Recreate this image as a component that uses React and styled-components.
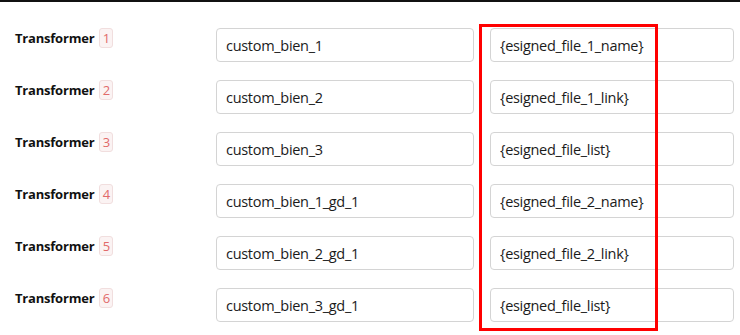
import React from 'react'
import styled, { createGlobalStyle } from 'styled-components'

const GlobalStyle = createGlobalStyle`
    body {
        margin: 0;
        background: #fff;
        font-family: "Open Sans", "Noto Sans", sans-serif;
    }
`

const Page = styled.div`
    position: relative;
    width: 740px;
    height: 335px;
    border-top: 2px solid #111;
    padding-top: 26px;
    box-sizing: border-box;
    display: flex;
    flex-direction: column;
    gap: 18px;
    overflow: hidden;
`

const Row = styled.div`
    display: grid;
    grid-template-columns: 185px 258px 244px;
    column-gap: 16px;
    padding-left: 15px;
    align-items: start;
`

const Label = styled.div`
    display: flex;
    align-items: center;
    gap: 5px;
    height: 20px;
    font-size: 13px;
    font-weight: 700;
    color: #111;
    letter-spacing: -0.2px;
`

const Badge = styled.span`
    display: inline-flex;
    align-items: center;
    justify-content: center;
    width: 14px;
    height: 20px;
    box-sizing: border-box;
    border: 1px solid #f1dede;
    border-radius: 3px;
    background: #fbf3f3;
    color: #e16a6a;
    font-size: 13px;
    font-weight: 400;
`

const Field = styled.input`
    height: 34px;
    box-sizing: border-box;
    border: 1px solid #d4d4d4;
    border-radius: 4px;
    padding: 0 9px;
    font-family: inherit;
    font-size: 14.5px;
    color: #1b1b1b;
    background: #fff;
    outline: none;
    width: 100%;
    letter-spacing: -0.3px;
`

const Highlight = styled.div`
    position: absolute;
    left: 479px;
    top: 22px;
    width: 179px;
    height: 307px;
    box-sizing: border-box;
    border: 3px solid #ff0000;
    pointer-events: none;
`

const rows = [
    ['custom_bien_1', '{esigned_file_1_name}'],
    ['custom_bien_2', '{esigned_file_1_link}'],
    ['custom_bien_3', '{esigned_file_list}'],
    ['custom_bien_1_gd_1', '{esigned_file_2_name}'],
    ['custom_bien_2_gd_1', '{esigned_file_2_link}'],
    ['custom_bien_3_gd_1', '{esigned_file_list}'],
]

const App = () => (
    <>
        <GlobalStyle />
        <Page>
            {rows.map(([name, value], i) => (
                <Row key={i}>
                    <Label>
                        Transformer
                        <Badge>{i + 1}</Badge>
                    </Label>
                    <Field defaultValue={name} />
                    <Field defaultValue={value} />
                </Row>
            ))}
            <Highlight />
        </Page>
    </>
)

export default App
